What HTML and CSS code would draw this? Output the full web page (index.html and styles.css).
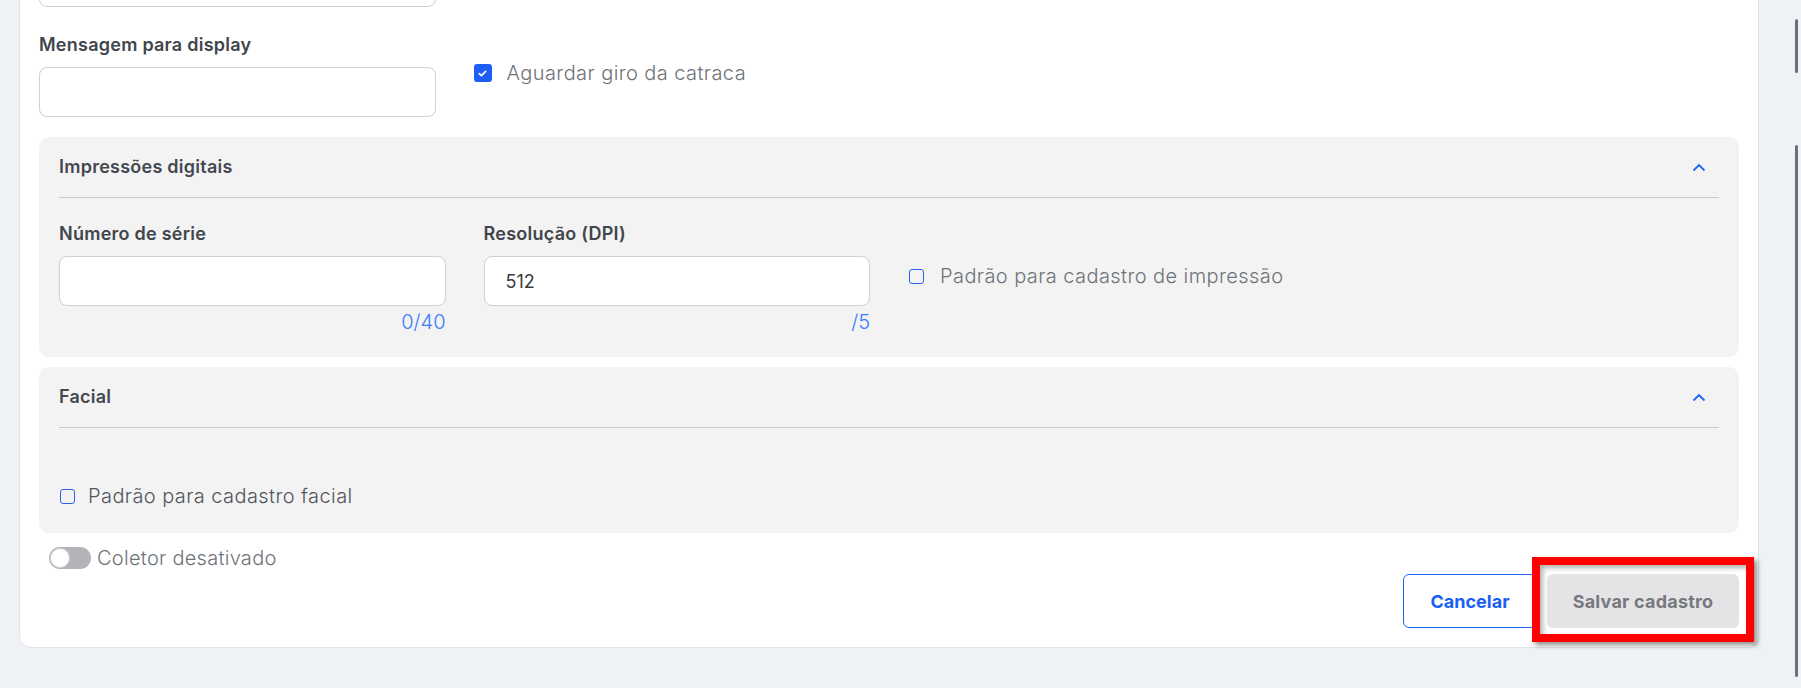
FILE: index.html
```html
<!DOCTYPE html>
<html lang="pt-BR">
<head>
<meta charset="utf-8">
<title>Cadastro de coletor</title>
<link rel="stylesheet" href="styles.css">
</head>
<body>
<div class="page">
  <main class="card">
    <div class="grid4">
      <div class="field">
        <input class="input" type="text" aria-label="Campo anterior">
      </div>
    </div>

    <div class="grid4 row-display">
      <div class="field">
        <label class="label" for="msg">Mensagem para display</label>
        <input class="input" id="msg" type="text">
      </div>
      <label class="check check-top">
        <span class="box box-on">
          <svg viewBox="0 0 12 12" width="11" height="11"><path d="M2.5 6.2l2.3 2.2 4.7-4.8" fill="none" stroke="#fff" stroke-width="1.8" stroke-linecap="round" stroke-linejoin="round"/></svg>
        </span>
        <span class="check-text">Aguardar giro da catraca</span>
      </label>
    </div>

    <section class="panel">
      <header class="panel-head">
        <h3 class="panel-title">Impressões digitais</h3>
        <svg class="chevron" viewBox="0 0 14 9" width="14" height="9"><polyline points="1.5,7.5 7,2 12.5,7.5" fill="none" stroke="#1f63f5" stroke-width="1.8"/></svg>
      </header>
      <div class="grid4 panel-body">
        <div class="field">
          <label class="label" for="serie">Número de série</label>
          <input class="input" id="serie" type="text">
          <div class="counter">0/40</div>
        </div>
        <div class="field">
          <label class="label" for="dpi">Resolução (DPI)</label>
          <input class="input" id="dpi" type="text" value="512">
          <div class="counter">/5</div>
        </div>
        <label class="check check-panel">
          <span class="box"></span>
          <span class="check-text">Padrão para cadastro de impressão</span>
        </label>
      </div>
    </section>

    <section class="panel panel-facial">
      <header class="panel-head">
        <h3 class="panel-title">Facial</h3>
        <svg class="chevron" viewBox="0 0 14 9" width="14" height="9"><polyline points="1.5,7.5 7,2 12.5,7.5" fill="none" stroke="#1f63f5" stroke-width="1.8"/></svg>
      </header>
      <div class="panel-body facial-body">
        <label class="check check-facial">
          <span class="box"></span>
          <span class="check-text dark">Padrão para cadastro facial</span>
        </label>
      </div>
    </section>

    <div class="toggle-row">
      <span class="toggle"><span class="knob"></span></span>
      <span class="toggle-text">Coletor desativado</span>
    </div>

    <div class="actions">
      <button class="btn btn-outline" type="button">Cancelar</button>
      <div class="save-wrap">
        <button class="btn btn-disabled" type="button">Salvar cadastro</button>
        <span class="highlight"></span>
      </div>
    </div>
  </main>

  <aside class="rail">
    <span class="thumb thumb-top"></span>
    <span class="thumb thumb-main"></span>
  </aside>
</div>
</body>
</html>
```

FILE: styles.css
```css
* {
  box-sizing: border-box;
}

html,
body {
  margin: 0;
  height: 100%;
}

body {
  background: #eef1f5;
  font-family: Inter, "Noto Sans", "Liberation Sans", sans-serif;
  overflow: hidden;
}

.page {
  display: flex;
  align-items: flex-start;
  height: 688px;
  padding-left: 19px;
}

/* main form card, scrolled so its top is above the viewport */
.card {
  width: 1740px;
  margin-top: -63px;
  background: #fff;
  border: 1px solid #e0e3e8;
  border-radius: 12px;
  padding: 19px;
}

.grid4 {
  display: grid;
  grid-template-columns: repeat(4, 1fr);
  column-gap: 38px;
  align-items: start;
}

.field {
  display: flex;
  flex-direction: column;
}

.label {
  display: block;
  font-size: 18px;
  line-height: 24px;
  font-weight: 600;
  letter-spacing: 0.25px;
  color: #41454c;
  margin-bottom: 10px;
}

.input {
  display: block;
  width: 100%;
  height: 50px;
  border: 1px solid #cfd0d3;
  border-radius: 8px;
  background: #fff;
  padding: 0 21px;
  font-family: Inter, "Noto Sans", sans-serif;
  font-size: 18px;
  color: #3a3c40;
  outline: none;
}

.row-display {
  margin-top: 26px;
}

.counter {
  margin-top: 4px;
  text-align: right;
  font-size: 20px;
  line-height: 24px;
  font-weight: 300;
  color: #3d7bf7;
}

/* checkboxes */
.check {
  display: flex;
  align-items: center;
  height: 28px;
  gap: 15px;
}

.check-top {
  margin-top: 26px;
}

.check-panel {
  margin-top: 40px;
  gap: 16px;
}

.check-facial {
  gap: 13px;
}

.box {
  flex: none;
  width: 15px;
  height: 15px;
  margin-left: 1px;
  border: 1.6px solid #2b63f0;
  border-radius: 3px;
}

.box-on {
  width: 18px;
  height: 18px;
  margin-left: 0;
  border: none;
  background: #1f5ef5;
  display: flex;
  align-items: center;
  justify-content: center;
}

.check-text {
  font-size: 20px;
  font-weight: 300;
  letter-spacing: 0.42px;
  color: #6f737a;
  white-space: nowrap;
}

.check-text.dark {
  color: #52565d;
}

/* collapsible panels */
.panel {
  margin-top: 20px;
  background: #f3f3f3;
  border-radius: 10px;
  padding: 0 20px 23px;
}

.panel-facial {
  margin-top: 10px;
}

.panel-head {
  height: 61px;
  display: flex;
  align-items: center;
  justify-content: space-between;
  border-bottom: 1px solid #c9c9c9;
}

.panel-title {
  margin: 0;
  font-size: 18px;
  line-height: 24px;
  font-weight: 600;
  letter-spacing: 0.25px;
  color: #434851;
}

.chevron {
  margin-right: 13px;
}

.panel-body {
  padding-top: 24px;
}

.facial-body {
  padding-top: 54px;
}

/* status toggle */
.toggle-row {
  display: flex;
  align-items: center;
  gap: 6px;
  height: 28px;
  margin-top: 11px;
  padding-left: 10px;
}

.toggle {
  position: relative;
  width: 42px;
  height: 22px;
  border-radius: 11px;
  background: #b3b3b8;
}

.knob {
  position: absolute;
  left: 1px;
  top: 1px;
  width: 20px;
  height: 20px;
  border-radius: 50%;
  background: #fff;
  border: 1px solid #d4d4d8;
}

.toggle-text {
  font-size: 20px;
  font-weight: 300;
  letter-spacing: 0.28px;
  color: #6f737a;
}

/* footer buttons */
.actions {
  display: flex;
  justify-content: flex-end;
  gap: 10px;
  margin-top: 2px;
}

.btn {
  height: 54px;
  border-radius: 6px;
  font-family: Inter, "Noto Sans", sans-serif;
  font-size: 18px;
  font-weight: 700;
  cursor: pointer;
}

.btn-outline {
  width: 134px;
  background: #fff;
  border: 1px solid #1f63f5;
  color: #1a5ff5;
}

.btn-disabled {
  width: 192px;
  background: #e4e4e7;
  border: none;
  color: #77787d;
  letter-spacing: 0.2px;
}

.save-wrap {
  position: relative;
  display: flex;
}

/* annotation frame drawn over the save button */
.highlight {
  position: absolute;
  left: -15px;
  right: -15px;
  top: -17px;
  bottom: -14px;
  border: 8px solid #ff0000;
  box-shadow: 3px 3px 5px rgba(0, 0, 0, 0.45), inset 3px 3px 5px rgba(0, 0, 0, 0.3);
  pointer-events: none;
}

/* scrollbar thumbs at the right edge */
.rail {
  display: flex;
  flex-direction: column;
  gap: 72px;
  margin-left: 36px;
  padding-top: 19px;
  width: 3px;
}

.thumb {
  display: block;
  width: 3px;
  border-radius: 2px;
  background: #6d7078;
}

.thumb-top {
  height: 54px;
}

.thumb-main {
  height: 532px;
}
```
